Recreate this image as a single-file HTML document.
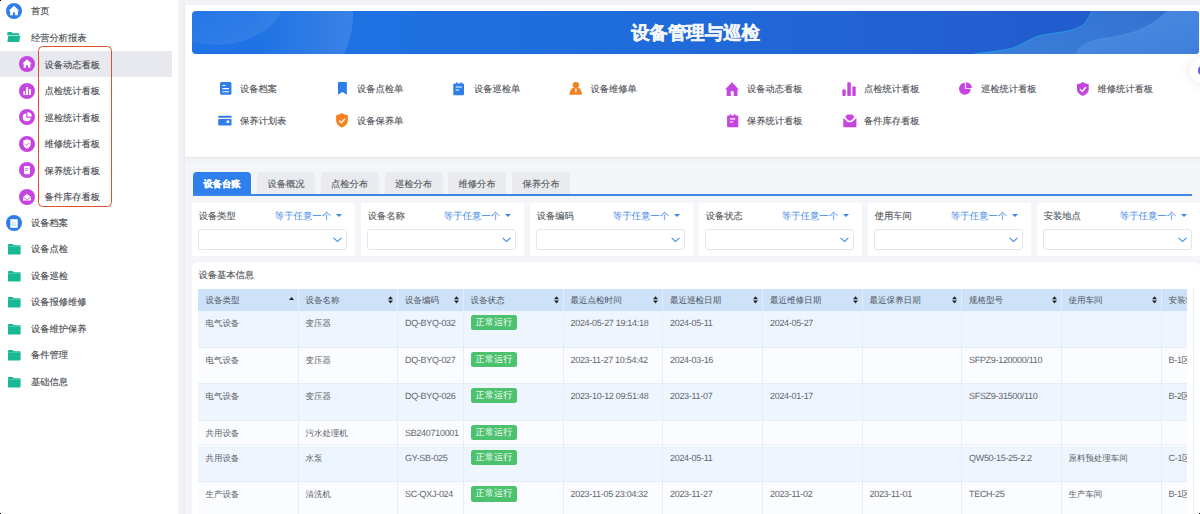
<!DOCTYPE html>
<html><head><meta charset="utf-8"><style>*{box-sizing:border-box;margin:0;padding:0}
html,body{width:1200px;height:514px;overflow:hidden;background:#fff}
body{text-rendering:geometricPrecision;font-family:"Liberation Sans",sans-serif;font-size:9.25px;color:#4a4d52;position:relative}
.a{position:absolute}
svg.a{overflow:visible}
#side{position:absolute;left:0;top:0;width:178px;height:514px;background:#fff}
.st,.lk,.th,.td,.tti,.lb,.op{position:absolute;white-space:nowrap;line-height:12px}
.st{color:#45484d;font-size:9.25px}
.sel{position:absolute;background:#e8e9ee}
.redbox{position:absolute;left:38.3px;top:45.8px;width:73.6px;height:161.6px;border:1.8px solid #e0522c;border-radius:4.5px}
#main{position:absolute;left:178px;top:0;width:1022px;height:514px;background:#f2f3f7}
#p1{position:absolute;left:185px;top:4.5px;width:1015px;height:152.5px;background:#fff;box-shadow:0 1px 1px #e6e7ec}
#banner{position:absolute;left:192px;top:11px;width:1007px;height:43px;border-radius:4px;overflow:hidden;background:linear-gradient(90deg,#1f73e6 0%,#1f6ddd 40%,#2262d2 70%,#2157cb 100%)}
#banner .ttl{position:absolute;left:0;width:100%;top:11px;text-align:center;color:#f4f6fa;font-weight:bold;font-size:18.4px;line-height:22px;-webkit-text-stroke:0.4px #f4f6fa}
.lk{color:#4f5257}
#float{position:absolute;left:1190px;top:58px;width:25px;height:25px;border-radius:50%;background:#fff;box-shadow:0 0 14px rgba(0,0,0,.09)}
#float i{position:absolute;left:7.5px;top:7px;width:11px;height:11px;border-radius:50%;background:#5a5cf0}
#p2{position:absolute;left:185px;top:163px;width:1015px;height:351px;background:#f4f5f9}
.tab{position:absolute;top:172px;height:23px;width:58px;border-radius:4px 4px 0 0;background:#eaebef;color:#55585d;text-align:center;line-height:25px;font-size:9.25px}
.tab.on{background:#2f80ed;color:#fff;font-weight:bold}
#tabline{position:absolute;left:193px;top:194px;width:999px;height:2px;background:#3d87ea}
.fc{position:absolute;top:202.5px;width:162.5px;height:53px;background:#fff}
.fc .lb{left:6.8px;top:7px;color:#55585d}
.fc .op{left:82.8px;top:7px;color:#3a86e8;font-size:9.4px}
.fc .tri{position:absolute;left:143.7px;top:11.8px;width:0;height:0;border-left:3.3px solid transparent;border-right:3.3px solid transparent;border-top:3.8px solid #3a86e8}
.fc .sb{position:absolute;left:5.8px;top:26.5px;width:149.5px;height:21px;border:1px solid #e3e6ec;border-radius:3px}
.fc .sb svg{position:absolute;left:134px;top:6.6px}
#tcard{position:absolute;left:192px;top:262px;width:1008px;height:252px;background:#fff;border-radius:6px 6px 0 0}
#tcard .tti{left:6.6px;top:7px;color:#4f5257}
#tcard .rline{position:absolute;left:1000.5px;top:27px;width:1px;height:230px;background:#e8f0fa}
#tbl{position:absolute;left:198px;top:289px;width:989px;height:225px;overflow:hidden}
.tclip{position:absolute;left:0;top:0;width:989px;height:225px}
.thead{background:#cde2f8}
.vline{width:1px}
.th{color:#4d5360;font-size:8.55px}
.td{color:#5a5e66;font-size:8.45px}
.badge{position:absolute;width:46.4px;height:15.2px;border-radius:2.5px;background:#4cc26f;color:#fff;text-align:center;line-height:15.5px;font-size:9.2px;white-space:nowrap}

#shad{position:absolute;left:183px;top:0;width:2px;height:514px;background:#ececf1}
.st,.lk,.lb,.tti,.tab{-webkit-text-stroke:0.12px currentColor}
.tab.on{-webkit-text-stroke:0.25px #fff}
.td.num,.td.mix{font-size:9px;letter-spacing:-0.3px;margin-top:-0.3px;color:#62666e}
</style></head><body>
<div id="side"><div class="sel" style="left:0;top:50.5px;width:172px;height:26.3px"></div><svg class="a" style="left:5.800000000000001px;top:2.6999999999999993px" width="16" height="16" viewBox="0 0 16 16"><circle cx="8" cy="8" r="8" fill="#2f7de9"/><path d="M8 2.7 L13.2 7.8 H11.9 V12.3 H9.1 V9.4 H6.9 V12.3 H4.1 V7.8 H2.8 Z" fill="#fff"/></svg><div class="st" style="left:31px;top:4.75px;">首页</div><svg class="a" style="left:7.3px;top:32px" width="14" height="11" viewBox="0 0 14 11"><path d="M0.3 1 Q0.3 0 1.3 0 H4.6 L5.8 1.3 H11.6 Q12.4 1.3 12.4 2.1 V3 H0.3 Z" fill="#19b894"/><path d="M0.3 3 H12.4 V3.8 H0.3 Z" fill="#8ad9c5"/><path d="M1.2 4 H13.2 L12.2 10 H0.3 Z" fill="#19b894"/></svg><div class="st" style="left:31px;top:31.5px;">经营分析报表</div><svg class="a" style="left:19px;top:56.0px" width="16" height="16" viewBox="0 0 16 16"><circle cx="8" cy="8" r="8" fill="#c644e0"/><path d="M8 3.2 L12.6 7.6 H11.4 V11.8 H9 V9.3 H7 V11.8 H4.6 V7.6 H3.4 Z" fill="#fff"/></svg><div class="st" style="left:44.5px;top:58.5px;">设备动态看板</div><svg class="a" style="left:19px;top:82.5px" width="16" height="16" viewBox="0 0 16 16"><circle cx="8" cy="8" r="8" fill="#c644e0"/><rect x="4.3" y="8" width="1.9" height="4" fill="#fff"/><rect x="7.1" y="4" width="1.9" height="8" fill="#fff"/><rect x="9.9" y="6" width="1.9" height="6" fill="#fff"/></svg><div class="st" style="left:44.5px;top:85.0px;">点检统计看板</div><svg class="a" style="left:19px;top:109.0px" width="16" height="16" viewBox="0 0 16 16"><circle cx="8" cy="8" r="8" fill="#c644e0"/><path d="M7.3 4.2 A4.1 4.1 0 1 0 11.9 8.8 H7.3 Z" fill="#fff"/><path d="M8.4 3.2 A4 4 0 0 1 12.8 7.6 H8.4 Z" fill="#fff"/></svg><div class="st" style="left:44.5px;top:111.5px;">巡检统计看板</div><svg class="a" style="left:19px;top:135.5px" width="16" height="16" viewBox="0 0 16 16"><circle cx="8" cy="8" r="8" fill="#c644e0"/><path d="M8 3.2 L11.6 4.5 V8.2 C11.6 10.4 9.9 11.9 8 12.8 C6.1 11.9 4.4 10.4 4.4 8.2 V4.5 Z" fill="#fff"/><path d="M6.3 8.1 L7.6 9.3 L9.9 6.9" stroke="#c644e0" stroke-width="0.9" fill="none"/></svg><div class="st" style="left:44.5px;top:138.0px;">维修统计看板</div><svg class="a" style="left:19px;top:162.0px" width="16" height="16" viewBox="0 0 16 16"><circle cx="8" cy="8" r="8" fill="#c644e0"/><rect x="5" y="4" width="6" height="8.2" rx="0.8" fill="#fff"/><rect x="6.2" y="6.4" width="3.2" height="0.8" fill="#c644e0"/><rect x="6.2" y="8" width="2.2" height="0.8" fill="#c644e0"/></svg><div class="st" style="left:44.5px;top:164.5px;">保养统计看板</div><svg class="a" style="left:19px;top:188.5px" width="16" height="16" viewBox="0 0 16 16"><circle cx="8" cy="8" r="8" fill="#c644e0"/><path d="M4 8 L8 5 L12 8 V11.6 H4 Z" fill="#fff"/><path d="M4.2 8.2 L8 10.6 L11.8 8.2" stroke="#c644e0" stroke-width="0.8" fill="none"/></svg><div class="st" style="left:44.5px;top:191.0px;">备件库存看板</div><div class="redbox"></div><svg class="a" style="left:5.800000000000001px;top:214.8px" width="16" height="16" viewBox="0 0 16 16"><circle cx="8" cy="8" r="8" fill="#2f7de9"/><rect x="4.3" y="5.6" width="7.4" height="8.6" fill="#fff" transform="translate(0,-1.4)"/><rect x="5.5" y="6.2" width="2" height="0.6" fill="#b9d3f7"/><rect x="5.5" y="7.4" width="4.6" height="0.7" fill="#b9d3f7"/><rect x="5.5" y="8.8" width="4.6" height="0.7" fill="#b9d3f7"/><rect x="5.5" y="10.2" width="4.6" height="0.7" fill="#b9d3f7"/></svg><div class="st" style="left:31px;top:217.3px;">设备档案</div><svg class="a" style="left:7.5px;top:244.0px" width="13" height="11" viewBox="0 0 13 11"><path d="M0 1 Q0 0 1 0 H4.6 L5.8 1.2 H11.8 Q12.6 1.2 12.6 2 V9.8 Q12.6 10.6 11.8 10.6 H0.8 Q0 10.6 0 9.8 Z" fill="#19b894"/><rect x="0" y="2.2" width="12.6" height="0.6" fill="#5fd0b3"/></svg><div class="st" style="left:31px;top:243.3px;">设备点检</div><svg class="a" style="left:7.5px;top:270.5px" width="13" height="11" viewBox="0 0 13 11"><path d="M0 1 Q0 0 1 0 H4.6 L5.8 1.2 H11.8 Q12.6 1.2 12.6 2 V9.8 Q12.6 10.6 11.8 10.6 H0.8 Q0 10.6 0 9.8 Z" fill="#19b894"/><rect x="0" y="2.2" width="12.6" height="0.6" fill="#5fd0b3"/></svg><div class="st" style="left:31px;top:269.8px;">设备巡检</div><svg class="a" style="left:7.5px;top:297.0px" width="13" height="11" viewBox="0 0 13 11"><path d="M0 1 Q0 0 1 0 H4.6 L5.8 1.2 H11.8 Q12.6 1.2 12.6 2 V9.8 Q12.6 10.6 11.8 10.6 H0.8 Q0 10.6 0 9.8 Z" fill="#19b894"/><rect x="0" y="2.2" width="12.6" height="0.6" fill="#5fd0b3"/></svg><div class="st" style="left:31px;top:296.3px;">设备报修维修</div><svg class="a" style="left:7.5px;top:323.5px" width="13" height="11" viewBox="0 0 13 11"><path d="M0 1 Q0 0 1 0 H4.6 L5.8 1.2 H11.8 Q12.6 1.2 12.6 2 V9.8 Q12.6 10.6 11.8 10.6 H0.8 Q0 10.6 0 9.8 Z" fill="#19b894"/><rect x="0" y="2.2" width="12.6" height="0.6" fill="#5fd0b3"/></svg><div class="st" style="left:31px;top:322.8px;">设备维护保养</div><svg class="a" style="left:7.5px;top:350.0px" width="13" height="11" viewBox="0 0 13 11"><path d="M0 1 Q0 0 1 0 H4.6 L5.8 1.2 H11.8 Q12.6 1.2 12.6 2 V9.8 Q12.6 10.6 11.8 10.6 H0.8 Q0 10.6 0 9.8 Z" fill="#19b894"/><rect x="0" y="2.2" width="12.6" height="0.6" fill="#5fd0b3"/></svg><div class="st" style="left:31px;top:349.3px;">备件管理</div><svg class="a" style="left:7.5px;top:376.5px" width="13" height="11" viewBox="0 0 13 11"><path d="M0 1 Q0 0 1 0 H4.6 L5.8 1.2 H11.8 Q12.6 1.2 12.6 2 V9.8 Q12.6 10.6 11.8 10.6 H0.8 Q0 10.6 0 9.8 Z" fill="#19b894"/><rect x="0" y="2.2" width="12.6" height="0.6" fill="#5fd0b3"/></svg><div class="st" style="left:31px;top:375.8px;">基础信息</div></div>
<div id="main"></div><div id="shad"></div>
<div id="p1"></div>
<div id="banner">
<svg class="a" style="left:0;top:0" width="1007" height="43" viewBox="0 0 1007 43">
<defs>
<linearGradient id="c1" x1="0" y1="0" x2="1" y2="1"><stop offset="0.35" stop-color="#fff" stop-opacity="0"/><stop offset="1" stop-color="#fff" stop-opacity=".11"/></linearGradient>
<linearGradient id="c2" x1="0" y1="0" x2="1" y2="0"><stop offset="0.45" stop-color="#fff" stop-opacity="0"/><stop offset="1" stop-color="#fff" stop-opacity=".12"/></linearGradient>
<linearGradient id="w1" x1="0" y1="1" x2="1" y2="0"><stop offset="0" stop-color="#3b80da"/><stop offset="1" stop-color="#3270d0"/></linearGradient>
<linearGradient id="w2" x1="0" y1="0" x2="1" y2="1"><stop offset="0" stop-color="#4a8de2"/><stop offset="1" stop-color="#3f7fdb"/></linearGradient>
</defs>
<ellipse cx="23" cy="-16" rx="70" ry="50" fill="url(#c1)"/>
<circle cx="73" cy="4" r="88" fill="url(#c2)"/>
<path d="M782 43 C800 40 815 40 826 35 C836 30 842 25 856 23 C870 21 885 20 893 12 C897 7 898 3 900 0 H1007 V43 Z" fill="url(#w1)"/>
<path d="M782 43 C800 40 815 40 826 35 C836 30 842 25 856 23 C870 21 885 20 893 12 C897 7 898 3 900 0" stroke="#22a7e8" stroke-width="0.9" fill="none" stroke-opacity=".85"/>
<path d="M884 43 C888 35 895 30 915 27 C935 24 955 20 976 0 H1007 V43 Z" fill="url(#w2)"/>
<path d="M884 43 C888 35 895 30 915 27 C935 24 955 20 976 0" stroke="#6aa6ea" stroke-width="0.6" fill="none" stroke-opacity=".6"/>
</svg>
<div class="ttl">设备管理与巡检</div></div>
<svg class="a" style="left:219.6px;top:82px" width="12" height="13" viewBox="0 0 12 13"><rect x="0" y="0" width="11.4" height="12.8" rx="1.4" fill="#2f7de9"/><rect x="2.3" y="2.95" width="3.3" height="1.1" rx=".5" fill="#fff"/><rect x="2.3" y="6.1" width="6.8" height="1.1" rx=".5" fill="#fff"/><rect x="2.3" y="9.15" width="6.8" height="1.1" rx=".5" fill="#fff"/></svg><svg class="a" style="left:337.8px;top:82px" width="10" height="13" viewBox="0 0 10 13"><path d="M0 0.6 Q0 0 0.6 0 H8.25 Q8.85 0 8.85 0.6 V12.8 L4.42 9.9 L0 12.8 Z" fill="#2f7de9"/></svg><svg class="a" style="left:453px;top:81.5px" width="12" height="14" viewBox="0 0 12 14"><rect x="0.3" y="1.6" width="10.7" height="11.7" rx="1" fill="#2f7de9"/><rect x="3.1" y="0.2" width="1.4" height="2.2" rx=".4" fill="#2f7de9"/><rect x="7.3" y="0.2" width="1.4" height="2.2" rx=".4" fill="#2f7de9"/><rect x="2.6" y="4.5" width="6.4" height="1.1" rx=".5" fill="#fff"/><rect x="2.6" y="7.4" width="3.7" height="1.1" rx=".5" fill="#fff"/></svg><svg class="a" style="left:569px;top:82px" width="14" height="13" viewBox="0 0 14 13"><circle cx="6.9" cy="3.1" r="3.2" fill="#f5821f"/><path d="M3.8 5.9 H10 Q12.6 7.6 13 12.3 Q13 12.8 12.5 12.8 H0.9 Q0.4 12.8 0.4 12.3 Q0.9 7.6 3.8 5.9 Z" fill="#f5821f"/><path d="M6.2 6.6 H7.6 L7.5 10.3 L6.9 11 L6.3 10.3 Z" fill="#fff"/></svg><svg class="a" style="left:218.4px;top:115px" width="14" height="11" viewBox="0 0 14 11"><rect x="0.2" y="0.7" width="13.3" height="2.1" rx=".6" fill="#2f7de9"/><rect x="0.2" y="4" width="13.3" height="6.5" rx=".8" fill="#2f7de9"/><rect x="8.6" y="5.6" width="2.6" height="2.4" rx=".5" fill="#fff"/></svg><svg class="a" style="left:336px;top:113px" width="13" height="15" viewBox="0 0 13 15"><path d="M6 0.1 Q8.5 2.1 11.9 2.3 V7.3 C11.9 10.6 9.3 13.3 6 14.6 C2.7 13.3 0.1 10.6 0.1 7.3 V2.3 Q3.5 2.1 6 0.1 Z" fill="#f5821f"/><path d="M3.3 7.6 L5.4 9.7 L9 5.6" stroke="#fff" stroke-width="1.4" fill="none"/></svg><svg class="a" style="left:725.3px;top:81.7px" width="14" height="15" viewBox="0 0 14 15"><path d="M7 0.3 L13.8 7.5 H12.5 V14.1 H8.7 V9.15 H5.7 V14.1 H1.7 V7.5 H0.1 Z" fill="#c644e0"/></svg><svg class="a" style="left:842.3px;top:81.5px" width="14" height="15" viewBox="0 0 14 15"><rect x="0.4" y="7.5" width="3.3" height="6.5" rx=".7" fill="#c644e0"/><rect x="5.3" y="0.2" width="3.5" height="13.8" rx=".7" fill="#c644e0"/><rect x="10.4" y="4.5" width="3.3" height="9.5" rx=".7" fill="#c644e0"/></svg><svg class="a" style="left:959.3px;top:82px" width="14" height="14" viewBox="0 0 14 14"><path d="M5.9 0.85 A5.9 5.9 0 1 0 11.8 6.75 H5.9 Z" fill="#c644e0"/><path d="M7.1 0.2 A5.8 5.8 0 0 1 12.9 6 H7.1 Z" fill="#c644e0"/></svg><svg class="a" style="left:1076.8px;top:81.7px" width="13" height="15" viewBox="0 0 13 15"><path d="M5.85 0 Q8.3 2 11.7 2.2 V7.2 C11.7 10.4 9.1 12.7 5.85 13.8 C2.6 12.7 0 10.4 0 7.2 V2.2 Q3.4 2 5.85 0 Z" fill="#c644e0"/><path d="M2.9 7.3 L5.4 9.5 L8.9 5" stroke="#fff" stroke-width="1.4" fill="none"/></svg><svg class="a" style="left:726.7px;top:113.6px" width="12" height="14" viewBox="0 0 12 14"><rect x="0.1" y="1.4" width="11.2" height="11.9" rx="1" fill="#c644e0"/><rect x="2.6" y="0.2" width="1.7" height="2.2" rx=".5" fill="#c644e0"/><rect x="6.8" y="0.2" width="1.8" height="2.2" rx=".5" fill="#c644e0"/><rect x="2.6" y="4.35" width="5.7" height="1.1" rx=".5" fill="#fff"/><rect x="2.6" y="7.4" width="3.7" height="1.1" rx=".5" fill="#fff"/></svg><svg class="a" style="left:842.6px;top:113.6px" width="14" height="14" viewBox="0 0 14 14"><path d="M3.6 1.2 Q4 0.4 4.8 0.4 H8.8 Q9.6 0.4 10 1.2 L11.4 3.1 L8.3 6.6 H5.3 L2.2 3.1 Z" fill="#c644e0"/><path d="M0.3 4.1 L4.9 8.2 H8.7 L13.4 4.1 V12.6 Q13.4 13.3 12.7 13.3 H1 Q0.3 13.3 0.3 12.6 Z" fill="#c644e0"/></svg><div class="lk" style="left:240px;top:83.0px;">设备档案</div><div class="lk" style="left:357px;top:83.0px;">设备点检单</div><div class="lk" style="left:474px;top:83.0px;">设备巡检单</div><div class="lk" style="left:590.6px;top:83.0px;">设备维修单</div><div class="lk" style="left:747px;top:83.0px;">设备动态看板</div><div class="lk" style="left:864px;top:83.0px;">点检统计看板</div><div class="lk" style="left:981px;top:83.0px;">巡检统计看板</div><div class="lk" style="left:1097.4px;top:83.0px;">维修统计看板</div><div class="lk" style="left:240px;top:115.0px;">保养计划表</div><div class="lk" style="left:357px;top:115.0px;">设备保养单</div><div class="lk" style="left:747px;top:115.0px;">保养统计看板</div><div class="lk" style="left:864px;top:115.0px;">备件库存看板</div>
<div id="float"><i></i></div>
<div id="p2"></div>
<div class="tab on" style="left:193px">设备台账</div><div class="tab" style="left:257px">设备概况</div><div class="tab" style="left:320.5px">点检分布</div><div class="tab" style="left:384.5px">巡检分布</div><div class="tab" style="left:448px">维修分布</div><div class="tab" style="left:512px">保养分布</div>
<div id="tabline"></div>
<div class="fc" style="left:192px;width:162.5px"><div class="lb">设备类型</div><div class="op">等于任意一个</div><i class="tri"></i><div class="sb"><svg width="9" height="6" viewBox="0 0 9 6"><path d="M0.6 0.8 L4.5 4.6 L8.4 0.8" stroke="#3a86e8" stroke-width="1.1" fill="none"/></svg></div></div><div class="fc" style="left:361px;width:162.5px"><div class="lb">设备名称</div><div class="op">等于任意一个</div><i class="tri"></i><div class="sb"><svg width="9" height="6" viewBox="0 0 9 6"><path d="M0.6 0.8 L4.5 4.6 L8.4 0.8" stroke="#3a86e8" stroke-width="1.1" fill="none"/></svg></div></div><div class="fc" style="left:530px;width:162.5px"><div class="lb">设备编码</div><div class="op">等于任意一个</div><i class="tri"></i><div class="sb"><svg width="9" height="6" viewBox="0 0 9 6"><path d="M0.6 0.8 L4.5 4.6 L8.4 0.8" stroke="#3a86e8" stroke-width="1.1" fill="none"/></svg></div></div><div class="fc" style="left:699px;width:162.5px"><div class="lb">设备状态</div><div class="op">等于任意一个</div><i class="tri"></i><div class="sb"><svg width="9" height="6" viewBox="0 0 9 6"><path d="M0.6 0.8 L4.5 4.6 L8.4 0.8" stroke="#3a86e8" stroke-width="1.1" fill="none"/></svg></div></div><div class="fc" style="left:868px;width:162.5px"><div class="lb">使用车间</div><div class="op">等于任意一个</div><i class="tri"></i><div class="sb"><svg width="9" height="6" viewBox="0 0 9 6"><path d="M0.6 0.8 L4.5 4.6 L8.4 0.8" stroke="#3a86e8" stroke-width="1.1" fill="none"/></svg></div></div><div class="fc" style="left:1037px;width:170px"><div class="lb">安装地点</div><div class="op">等于任意一个</div><i class="tri"></i><div class="sb"><svg width="9" height="6" viewBox="0 0 9 6"><path d="M0.6 0.8 L4.5 4.6 L8.4 0.8" stroke="#3a86e8" stroke-width="1.1" fill="none"/></svg></div></div>
<div id="tcard"><div class="tti">设备基本信息</div><div class="rline"></div></div>
<div id="tbl"><div class="tclip"><div class="a thead" style="left:0;top:0;width:1000px;height:21.5px"></div><div class="a vline" style="left:99.75px;top:0;height:21.5px;background:#e2edf9"></div><div class="th" style="left:7.4px;top:5.1px">设备类型</div><svg class="a" style="left:90.5px;top:8px" width="5" height="3" viewBox="0 0 5 3"><path d="M0 3 L2.5 0 L5 3Z" fill="#222"/></svg><div class="a vline" style="left:199.25px;top:0;height:21.5px;background:#e2edf9"></div><div class="th" style="left:107.4px;top:5.1px">设备名称</div><svg class="a" style="left:190.0px;top:6.5px" width="5" height="8" viewBox="0 0 5 8"><path d="M0 3.2 L2.5 0.2 L5 3.2Z M0 4.6 L2.5 7.6 L5 4.6Z" fill="#222"/></svg><div class="a vline" style="left:264.75px;top:0;height:21.5px;background:#e2edf9"></div><div class="th" style="left:206.9px;top:5.1px">设备编码</div><svg class="a" style="left:255.5px;top:6.5px" width="5" height="8" viewBox="0 0 5 8"><path d="M0 3.2 L2.5 0.2 L5 3.2Z M0 4.6 L2.5 7.6 L5 4.6Z" fill="#222"/></svg><div class="a vline" style="left:364.75px;top:0;height:21.5px;background:#e2edf9"></div><div class="th" style="left:272.4px;top:5.1px">设备状态</div><svg class="a" style="left:355.5px;top:6.5px" width="5" height="8" viewBox="0 0 5 8"><path d="M0 3.2 L2.5 0.2 L5 3.2Z M0 4.6 L2.5 7.6 L5 4.6Z" fill="#222"/></svg><div class="a vline" style="left:464.25px;top:0;height:21.5px;background:#e2edf9"></div><div class="th" style="left:372.4px;top:5.1px">最近点检时间</div><svg class="a" style="left:455.0px;top:6.5px" width="5" height="8" viewBox="0 0 5 8"><path d="M0 3.2 L2.5 0.2 L5 3.2Z M0 4.6 L2.5 7.6 L5 4.6Z" fill="#222"/></svg><div class="a vline" style="left:564.25px;top:0;height:21.5px;background:#e2edf9"></div><div class="th" style="left:471.9px;top:5.1px">最近巡检日期</div><svg class="a" style="left:555.0px;top:6.5px" width="5" height="8" viewBox="0 0 5 8"><path d="M0 3.2 L2.5 0.2 L5 3.2Z M0 4.6 L2.5 7.6 L5 4.6Z" fill="#222"/></svg><div class="a vline" style="left:663.75px;top:0;height:21.5px;background:#e2edf9"></div><div class="th" style="left:571.9px;top:5.1px">最近维修日期</div><svg class="a" style="left:654.5px;top:6.5px" width="5" height="8" viewBox="0 0 5 8"><path d="M0 3.2 L2.5 0.2 L5 3.2Z M0 4.6 L2.5 7.6 L5 4.6Z" fill="#222"/></svg><div class="a vline" style="left:763.25px;top:0;height:21.5px;background:#e2edf9"></div><div class="th" style="left:671.4px;top:5.1px">最近保养日期</div><svg class="a" style="left:754.0px;top:6.5px" width="5" height="8" viewBox="0 0 5 8"><path d="M0 3.2 L2.5 0.2 L5 3.2Z M0 4.6 L2.5 7.6 L5 4.6Z" fill="#222"/></svg><div class="a vline" style="left:862.75px;top:0;height:21.5px;background:#e2edf9"></div><div class="th" style="left:770.9px;top:5.1px">规格型号</div><svg class="a" style="left:853.5px;top:6.5px" width="5" height="8" viewBox="0 0 5 8"><path d="M0 3.2 L2.5 0.2 L5 3.2Z M0 4.6 L2.5 7.6 L5 4.6Z" fill="#222"/></svg><div class="a vline" style="left:962.75px;top:0;height:21.5px;background:#e2edf9"></div><div class="th" style="left:870.4px;top:5.1px">使用车间</div><svg class="a" style="left:953.5px;top:6.5px" width="5" height="8" viewBox="0 0 5 8"><path d="M0 3.2 L2.5 0.2 L5 3.2Z M0 4.6 L2.5 7.6 L5 4.6Z" fill="#222"/></svg><div class="a vline" style="left:1062.75px;top:0;height:21.5px;background:#e2edf9"></div><div class="th" style="left:970.4px;top:5.1px">安装地点</div><svg class="a" style="left:1053.5px;top:6.5px" width="5" height="8" viewBox="0 0 5 8"><path d="M0 3.2 L2.5 0.2 L5 3.2Z M0 4.6 L2.5 7.6 L5 4.6Z" fill="#222"/></svg><div class="a" style="left:0;top:21.600000000000023px;width:989px;height:37.0px;background:#eef5fd;border-bottom:1px solid #e3eefa"></div><div class="td" style="left:7.5px;top:28.10px">电气设备</div><div class="td" style="left:107.5px;top:28.10px">变压器</div><div class="td num" style="left:207.0px;top:28.10px">DQ-BYQ-032</div><div class="badge" style="left:272.8px;top:26.10px">正常运行</div><div class="td num" style="left:372.5px;top:28.10px">2024-05-27 19:14:18</div><div class="td num" style="left:472.0px;top:28.10px">2024-05-11</div><div class="td num" style="left:572.0px;top:28.10px">2024-05-27</div><div class="a" style="left:0;top:58.60000000000002px;width:989px;height:36.099999999999966px;background:#fbfcff;border-bottom:1px solid #e3eefa"></div><div class="td" style="left:7.5px;top:65.10px">电气设备</div><div class="td" style="left:107.5px;top:65.10px">变压器</div><div class="td num" style="left:207.0px;top:65.10px">DQ-BYQ-027</div><div class="badge" style="left:272.8px;top:63.10px">正常运行</div><div class="td num" style="left:372.5px;top:65.10px">2023-11-27 10:54:42</div><div class="td num" style="left:472.0px;top:65.10px">2024-03-16</div><div class="td num" style="left:771.0px;top:65.10px">SFPZ9-120000/110</div><div class="td mix" style="left:970.5px;top:65.10px">B-1区</div><div class="a" style="left:0;top:94.69999999999999px;width:989px;height:36.900000000000034px;background:#eef5fd;border-bottom:1px solid #e3eefa"></div><div class="td" style="left:7.5px;top:101.20px">电气设备</div><div class="td" style="left:107.5px;top:101.20px">变压器</div><div class="td num" style="left:207.0px;top:101.20px">DQ-BYQ-026</div><div class="badge" style="left:272.8px;top:99.20px">正常运行</div><div class="td num" style="left:372.5px;top:101.20px">2023-10-12 09:51:48</div><div class="td num" style="left:472.0px;top:101.20px">2023-11-07</div><div class="td num" style="left:572.0px;top:101.20px">2024-01-17</div><div class="td num" style="left:771.0px;top:101.20px">SFSZ9-31500/110</div><div class="td mix" style="left:970.5px;top:101.20px">B-2区</div><div class="a" style="left:0;top:131.60000000000002px;width:989px;height:24.899999999999977px;background:#fbfcff;border-bottom:1px solid #e3eefa"></div><div class="td" style="left:7.5px;top:138.10px">共用设备</div><div class="td" style="left:107.5px;top:138.10px">污水处理机</div><div class="td num" style="left:207.0px;top:138.10px">SB240710001</div><div class="badge" style="left:272.8px;top:136.10px">正常运行</div><div class="a" style="left:0;top:156.5px;width:989px;height:36.39999999999998px;background:#eef5fd;border-bottom:1px solid #e3eefa"></div><div class="td" style="left:7.5px;top:163.00px">共用设备</div><div class="td" style="left:107.5px;top:163.00px">水泵</div><div class="td num" style="left:207.0px;top:163.00px">GY-SB-025</div><div class="badge" style="left:272.8px;top:161.00px">正常运行</div><div class="td num" style="left:472.0px;top:163.00px">2024-05-11</div><div class="td num" style="left:771.0px;top:163.00px">QW50-15-25-2.2</div><div class="td" style="left:870.5px;top:163.00px">原料预处理车间</div><div class="td mix" style="left:970.5px;top:163.00px">C-1区</div><div class="a" style="left:0;top:192.89999999999998px;width:989px;height:36.60000000000002px;background:#fbfcff;border-bottom:1px solid #e3eefa"></div><div class="td" style="left:7.5px;top:199.40px">生产设备</div><div class="td" style="left:107.5px;top:199.40px">清洗机</div><div class="td num" style="left:207.0px;top:199.40px">SC-QXJ-024</div><div class="badge" style="left:272.8px;top:197.40px">正常运行</div><div class="td num" style="left:372.5px;top:199.40px">2023-11-05 23:04:32</div><div class="td num" style="left:472.0px;top:199.40px">2023-11-27</div><div class="td num" style="left:572.0px;top:199.40px">2023-11-02</div><div class="td num" style="left:671.5px;top:199.40px">2023-11-01</div><div class="td num" style="left:771.0px;top:199.40px">TECH-25</div><div class="td" style="left:870.5px;top:199.40px">生产车间</div><div class="td mix" style="left:970.5px;top:199.40px">B-1区</div><div class="a" style="left:99.75px;top:21.5px;width:1px;height:210px;background:#e3eefa"></div><div class="a" style="left:199.25px;top:21.5px;width:1px;height:210px;background:#e3eefa"></div><div class="a" style="left:264.75px;top:21.5px;width:1px;height:210px;background:#e3eefa"></div><div class="a" style="left:364.75px;top:21.5px;width:1px;height:210px;background:#e3eefa"></div><div class="a" style="left:464.25px;top:21.5px;width:1px;height:210px;background:#e3eefa"></div><div class="a" style="left:564.25px;top:21.5px;width:1px;height:210px;background:#e3eefa"></div><div class="a" style="left:663.75px;top:21.5px;width:1px;height:210px;background:#e3eefa"></div><div class="a" style="left:763.25px;top:21.5px;width:1px;height:210px;background:#e3eefa"></div><div class="a" style="left:862.75px;top:21.5px;width:1px;height:210px;background:#e3eefa"></div><div class="a" style="left:962.75px;top:21.5px;width:1px;height:210px;background:#e3eefa"></div><div class="a" style="left:1062.75px;top:21.5px;width:1px;height:210px;background:#e3eefa"></div></div></div>
<div class="a" style="left:0;top:0;width:1px;height:1px;background:#000"></div>
<div class="a" style="left:1199px;top:513px;width:1px;height:1px;background:#000"></div><div class="a" style="left:0;top:513px;width:1px;height:1px;background:#000"></div>
</body></html>
